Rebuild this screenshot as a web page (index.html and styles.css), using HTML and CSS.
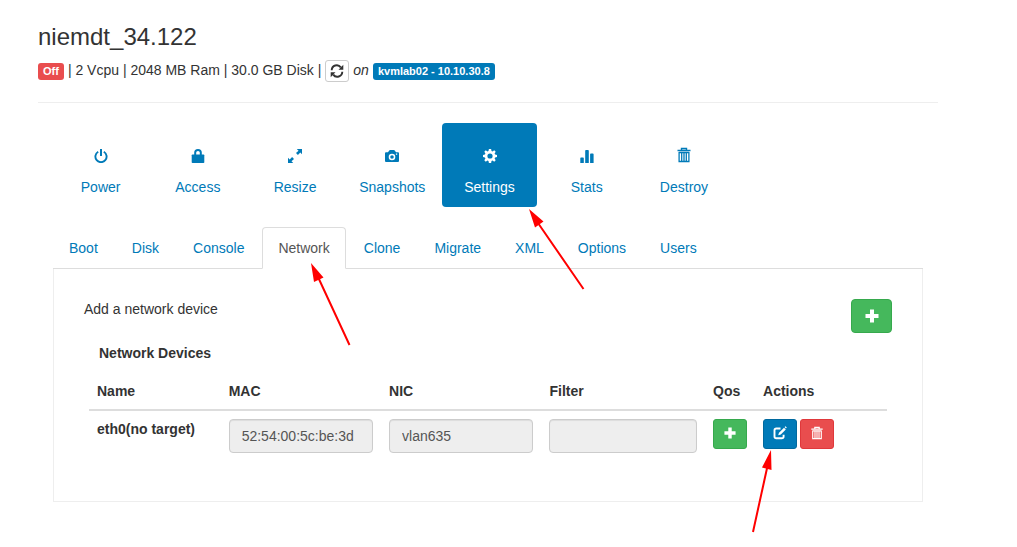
FILE: index.html
```html
<!DOCTYPE html>
<html lang="en">
<head>
<meta charset="utf-8">
<title>niemdt_34.122</title>
<link rel="stylesheet" href="styles.css">
</head>
<body>
<svg class="sprite" aria-hidden="true">
  <symbol id="power" viewBox="0 0 14 14"><path d="M4.2 2.7A5.6 5.6 0 1 0 9.800 2.700" fill="none" stroke="currentColor" stroke-width="1.900"/><path d="M6 0h2v7H6z" fill="currentColor"/></symbol>
  <symbol id="lock" viewBox="0 0 14 14"><path d="M4.200 6V3.500Q4.200 1 7 1t2.800 2.500V6" fill="none" stroke="currentColor" stroke-width="2"/><path d="M1.500 5.500h11q.8 0 .8.800v6.900q0 .8-.8.800h-11q-.8 0-.8-.8V6.300q0-.8.8-.8z" fill="currentColor"/></symbol>
  <symbol id="resize" viewBox="0 0 14 14"><path d="M8.800 0H14v5.200L12.300 3.500 9.900 6 8 4.100l2.500-2.400zM5.200 14H0V8.800l1.700 1.700L4.100 8 6 9.900l-2.500 2.400z" fill="currentColor"/></symbol>
  <symbol id="camera" viewBox="0 0 14 14"><path fill-rule="evenodd" d="M4.800 1h4.400l1.900 2.200H13q1 0 1 1V12q0 1-1 1H1q-1 0-1-1V4.200q0-1 1-1h1.900zM7 4.700a3.300 3.300 0 1 0 0 6.600 3.300 3.300 0 0 0 0-6.600zm0 1.500a1.800 1.800 0 1 1 0 3.600 1.800 1.800 0 0 1 0-3.600zM10.900 4.500v1.300h1.300V4.500z" fill="currentColor"/></symbol>
  <symbol id="cog" viewBox="0 0 14 14"><path fill-rule="evenodd" d="M5.900 0h2.200l.4 1.900 1.100.5 1.600-1.100 1.500 1.500-1.100 1.600.5 1.100 1.900.4v2.200l-1.900.4-.5 1.100 1.100 1.600-1.500 1.500-1.600-1.100-1.100.5-.4 1.900H5.900l-.4-1.900-1.100-.5-1.600 1.100-1.500-1.500 1.100-1.600-.5-1.100L0 8.100V5.900l1.900-.4.5-1.100-1.100-1.600 1.500-1.500 1.600 1.100 1.100-.5zM7 4.400a2.600 2.600 0 1 0 0 5.200 2.600 2.600 0 0 0 0-5.200z" fill="currentColor"/></symbol>
  <symbol id="stats" viewBox="0 0 14 14"><path d="M1 8.500h2q.8 0 .8.800V14H.3V9.300q0-.8.700-.8zM6 1h2q.8 0 .8.800V14H5.200V1.800Q5.200 1 6 1zM10.900 4.500h1.900q.8 0 .8.800V14h-3.500V5.300q0-.8.800-.8z" fill="currentColor"/></symbol>
  <symbol id="trash" viewBox="0 0 14 16"><path d="M.5 3.500h13M4.500 3V1.500h5V3" fill="none" stroke="currentColor" stroke-width="1.400"/><path d="M2.100 5v9.500h9.800V5M2 5.500h10M4.700 6v8M7 6v8M9.300 6v8" fill="none" stroke="currentColor" stroke-width="1.300"/></symbol>
  <symbol id="plus" viewBox="0 0 14 14"><path d="M5 .5h4V5h4.500v4H9v4.500H5V9H.5V5H5z" fill="currentColor"/></symbol>
  <symbol id="edit" viewBox="0 0 14 14"><path d="M7.500 2.500H3.300Q1.500 2.500 1.500 4.300v6.200q0 1.800 1.800 1.800h5.500q1.800 0 1.800-1.800V8.700" fill="none" stroke="currentColor" stroke-width="1.900"/><path d="M5.200 9.300l.8-2.600 5-5 1.800 1.800-5 5zM11.600 1.100l.9-.9 1.300 1.300-.9.900z" fill="currentColor"/></symbol>
  <symbol id="refresh" viewBox="0 0 14 14"><path d="M1.700 6.200A5 5 0 0 1 10.800 3.400M12.300 7.800A5 5 0 0 1 3.200 10.600" fill="none" stroke="currentColor" stroke-width="1.900"/><path d="M13.300.8v5H8.500zM.7 13.200v-5h4.800z" fill="currentColor"/></symbol>
</svg>

<main class="page">
  <header class="header">
    <h1 class="title">niemdt_34.122</h1>
    <div class="summary">
      <span class="label label-danger">Off</span>
      <span>| 2 Vcpu | 2048 MB Ram | 30.0 GB Disk |</span>
      <button class="refresh" type="button" aria-label="Refresh"><svg class="icon"><use href="#refresh"/></svg></button>
      <em>on</em>
      <span class="label label-primary">kvmlab02 - 10.10.30.8</span>
    </div>
  </header>

  <div class="content">
    <nav class="pills">
      <a class="pill" href="#p"><svg class="icon"><use href="#power"/></svg>Power</a>
      <a class="pill" href="#a"><svg class="icon"><use href="#lock"/></svg>Access</a>
      <a class="pill" href="#r"><svg class="icon"><use href="#resize"/></svg>Resize</a>
      <a class="pill" href="#s"><svg class="icon"><use href="#camera"/></svg>Snapshots</a>
      <a class="pill active" href="#t"><svg class="icon"><use href="#cog"/></svg>Settings</a>
      <a class="pill" href="#g"><svg class="icon"><use href="#stats"/></svg>Stats</a>
      <a class="pill" href="#d"><svg class="icon icon-trash"><use href="#trash"/></svg>Destroy</a>
    </nav>

    <nav class="tabs">
      <a class="tab" href="#boot">Boot</a>
      <a class="tab" href="#disk">Disk</a>
      <a class="tab" href="#console">Console</a>
      <a class="tab active" href="#network">Network</a>
      <a class="tab" href="#clone">Clone</a>
      <a class="tab" href="#migrate">Migrate</a>
      <a class="tab" href="#xml">XML</a>
      <a class="tab" href="#options">Options</a>
      <a class="tab" href="#users">Users</a>
    </nav>

    <section class="panel">
      <div class="add-row">
        <p class="add-text">Add a network device</p>
        <button class="btn btn-success" type="button" aria-label="Add a network device"><svg class="icon"><use href="#plus"/></svg></button>
      </div>
      <h2 class="subtitle">Network Devices</h2>
      <table class="table">
        <thead>
          <tr><th class="col-name">Name</th><th class="col-mac">MAC</th><th class="col-nic">NIC</th><th class="col-filter">Filter</th><th class="col-qos">Qos</th><th>Actions</th></tr>
        </thead>
        <tbody>
          <tr>
            <td><label class="device" for="mac">eth0(no target)</label></td>
            <td><input class="field" id="mac" type="text" value="52:54:00:5c:be:3d" readonly></td>
            <td><input class="field" type="text" value="vlan635" aria-label="NIC" readonly></td>
            <td><input class="field" type="text" aria-label="Filter" readonly></td>
            <td><button class="btn btn-small btn-success" type="button" aria-label="Add QoS"><svg class="icon icon-plus"><use href="#plus"/></svg></button></td>
            <td>
              <div class="actions">
                <button class="btn btn-small btn-primary" type="button" aria-label="Edit"><svg class="icon"><use href="#edit"/></svg></button>
                <button class="btn btn-small btn-danger" type="button" aria-label="Delete"><svg class="icon"><use href="#trash"/></svg></button>
              </div>
            </td>
          </tr>
        </tbody>
      </table>
    </section>
  </div>
</main>

<svg class="arrows" width="1017" height="547" viewBox="0 0 1017 547" aria-hidden="true">
  <path class="arrow-line" d="M349.500 345L318 277M583.500 289L538 223M753 532L767.500 466"/>
  <path class="arrow-head" d="M311 263L323.500 277.500 314 282zM529 209L543.500 221.500 535 227.500zM771 450L771.500 470 762 467.500z"/>
</svg>
</body>
</html>
```

FILE: styles.css
```css
* {
  box-sizing: border-box;
}

body {
  margin: 0;
  background: #fff;
  color: #333;
  font: 14px/20px "Liberation Sans", Arial, sans-serif;
}

a {
  color: #007ab8;
  text-decoration: none;
}

.sprite {
  display: none;
}

.page {
  padding: 22px 79px 45px 38px;
}

.header {
  padding-bottom: 20px;
  border-bottom: 1px solid #eee;
}

.title {
  margin: 0 0 8px;
  font-size: 24px;
  line-height: 30px;
  font-weight: normal;
}

.summary {
  display: flex;
  align-items: baseline;
  gap: 4px;
}

.label {
  padding: 0 5px;
  border-radius: 3px;
  color: #fff;
  font-size: 11px;
  line-height: 17px;
  font-weight: bold;
}

.label-danger {
  background: #e94d4e;
}

.label-primary {
  background: #007ab8;
}

.refresh {
  display: flex;
  align-self: flex-start;
  padding: 3px 4px;
  border: 1px solid #ccc;
  border-radius: 3px;
  background: #fff;
  color: #333;
}

.icon {
  display: block;
  width: 14px;
  height: 14px;
}

.content {
  padding: 20px 15px 0;
}

.pills {
  display: grid;
  grid-template-columns: repeat(7, minmax(0, 1fr));
  gap: 2px;
  width: 78%;
  margin-bottom: 20px;
}

.pill {
  display: flex;
  flex-direction: column;
  align-items: center;
  gap: 14px;
  padding: 26px 0 10px;
  border-radius: 4px;
}

.pill.active {
  background: #007ab8;
  color: #fff;
}

.icon-trash {
  height: 16px;
  margin-top: -2px;
}

.tabs {
  display: flex;
  gap: 2px;
  border-bottom: 1px solid #ddd;
}

.tab {
  margin-bottom: -1px;
  padding: 10px 15px;
  border: 1px solid transparent;
  border-radius: 4px 4px 0 0;
}

.tab.active {
  border-color: #ddd #ddd #fff;
  background: #fff;
  color: #555;
}

.panel {
  padding: 30px 30px 40px;
  border: 1px solid #eee;
  border-top: 0;
}

.add-row {
  display: flex;
  justify-content: space-between;
}

.add-text {
  margin: 0;
}

.btn {
  display: flex;
  align-items: center;
  justify-content: center;
  width: 41px;
  height: 34px;
  padding: 0;
  border: 1px solid;
  border-radius: 4px;
  color: #fff;
}

.btn-small {
  width: 34px;
  height: 30px;
  padding-bottom: 2px;
  border-radius: 3px;
}

.icon-plus {
  width: 12px;
  height: 12px;
}

.btn-success {
  border-color: #36a94d;
  background: #45b85c;
}

.btn-primary {
  border-color: #00699e;
  background: #007ab8;
}

.btn-danger {
  border-color: #e0383b;
  background: #e94d4e;
}

.subtitle {
  margin: 10px 15px;
  font-size: 14px;
  line-height: 20px;
}

.table {
  width: calc(100% - 10px);
  margin: 0 5px;
  border-collapse: separate;
  border-spacing: 0;
  table-layout: fixed;
}

.table th,
.table td {
  padding: 8px;
  text-align: left;
  vertical-align: top;
}

.table th {
  border-bottom: 2px solid #ddd;
}

.col-name {
  width: 16.5%;
}

.col-mac,
.col-nic {
  width: 20.1%;
}

.col-filter {
  width: 20.5%;
}

.col-qos {
  width: 50px;
}

.device {
  font-weight: bold;
}

.field {
  display: block;
  width: 100%;
  height: 34px;
  padding: 6px 12px;
  border: 1px solid #ccc;
  border-radius: 4px;
  background: #eee;
  box-shadow: inset 0 1px 1px rgba(0, 0, 0, 0.075);
  color: #555;
  font: inherit;
}

.actions {
  display: flex;
  gap: 3px;
}

.arrows {
  position: absolute;
  top: 0;
  left: 0;
  pointer-events: none;
}

.arrow-line {
  fill: none;
  stroke: #f00;
  stroke-width: 2;
}

.arrow-head {
  fill: #f00;
}
```
